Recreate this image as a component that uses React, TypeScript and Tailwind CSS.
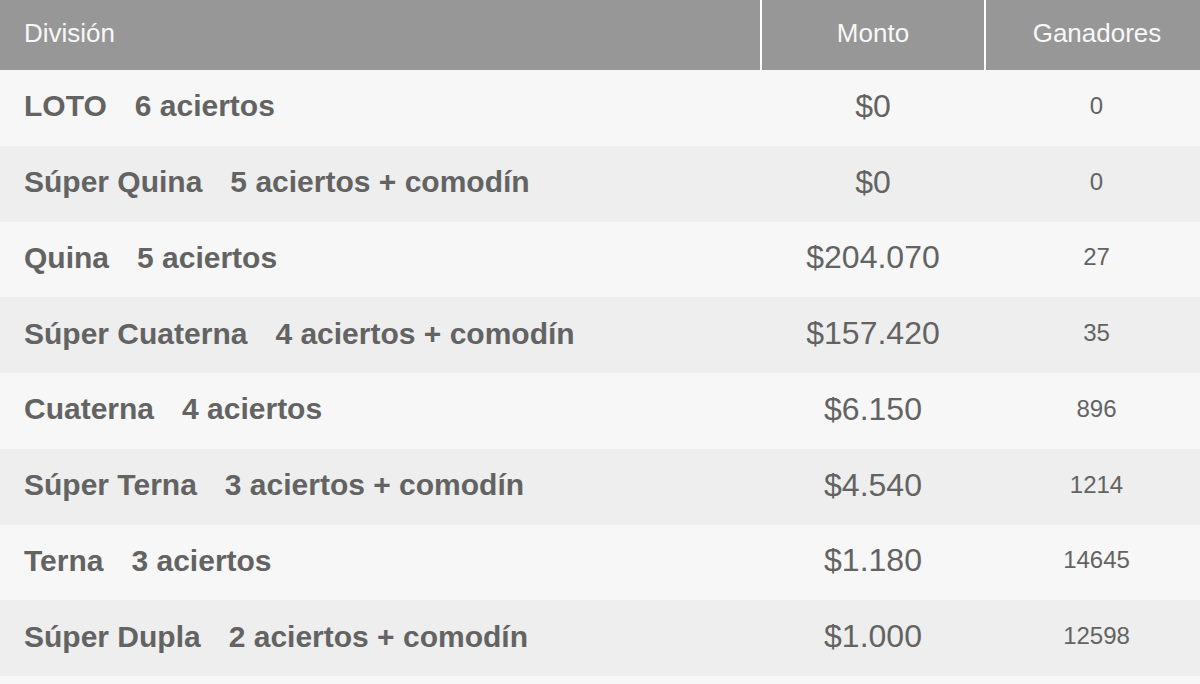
const rows = [
  { name: "LOTO", hits: "6 aciertos", amount: "$0", winners: "0" },
  { name: "Súper Quina", hits: "5 aciertos + comodín", amount: "$0", winners: "0" },
  { name: "Quina", hits: "5 aciertos", amount: "$204.070", winners: "27" },
  { name: "Súper Cuaterna", hits: "4 aciertos + comodín", amount: "$157.420", winners: "35" },
  { name: "Cuaterna", hits: "4 aciertos", amount: "$6.150", winners: "896" },
  { name: "Súper Terna", hits: "3 aciertos + comodín", amount: "$4.540", winners: "1214" },
  { name: "Terna", hits: "3 aciertos", amount: "$1.180", winners: "14645" },
  { name: "Súper Dupla", hits: "2 aciertos + comodín", amount: "$1.000", winners: "12598" },
];

export default function App() {
  return (
    <div className="min-h-screen bg-[#f7f7f7] font-['Liberation_Sans',Arial,sans-serif] text-[#636363]">
      <table className="w-[1200px] table-fixed border-collapse">
        <colgroup>
          <col className="w-[761px]" />
          <col className="w-[224px]" />
          <col className="w-[215px]" />
        </colgroup>
        <thead>
          <tr className="h-[70px] bg-[#979797] text-[26px] font-normal text-[#f8f8f8]">
            <th className="pb-[3px] pl-6 text-left font-normal">División</th>
            <th className="border-l-2 border-white pb-[3px] text-center font-normal">Monto</th>
            <th className="border-l-2 border-white pb-[3px] pl-2 text-center font-normal">Ganadores</th>
          </tr>
        </thead>
        <tbody>
          {rows.map((r, i) => (
            <tr key={r.name} className={`h-[75.75px] ${i % 2 === 0 ? "bg-[#f7f7f7]" : "bg-[#eeeeee]"}`}>
              <td className="pb-1 pl-6 text-[30px] font-bold">
                {r.name}
                <span className="ml-[28px]">{r.hits}</span>
              </td>
              <td className="pb-1 text-center text-[32px]">{r.amount}</td>
              <td className="pb-1 pl-2 text-center text-[24px]">{r.winners}</td>
            </tr>
          ))}
        </tbody>
      </table>
    </div>
  );
}
